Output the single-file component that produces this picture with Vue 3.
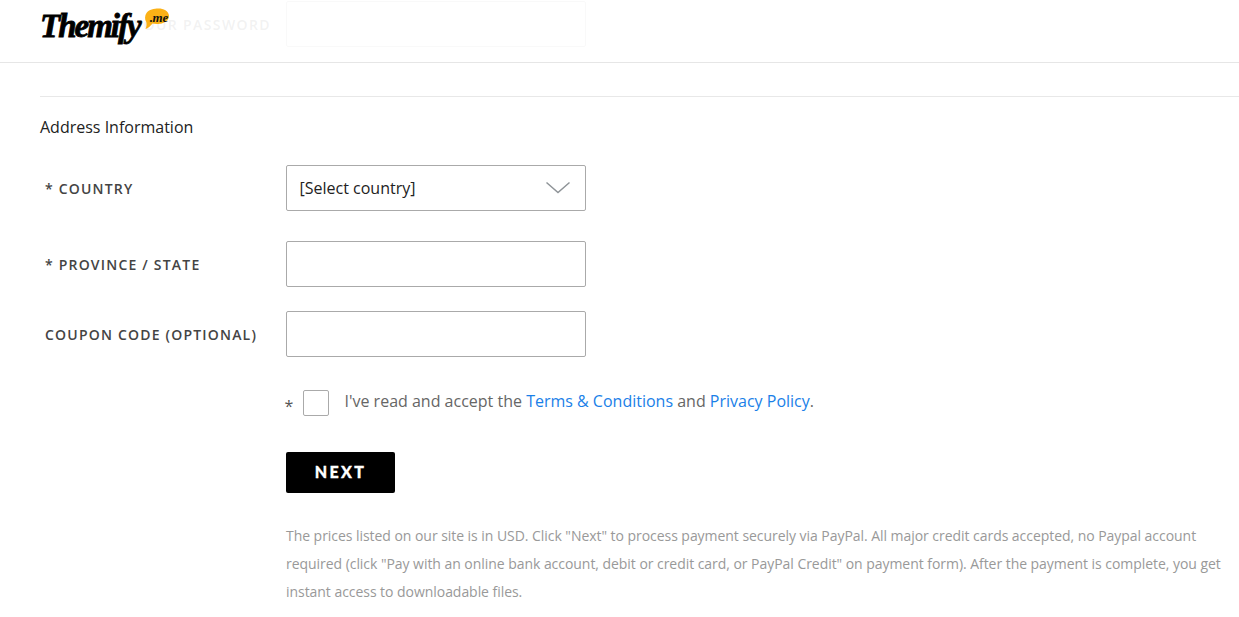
<template>
  <div class="page">
    <header class="site-header">
      <div class="logo">
        <span class="logo-word">Themify</span>
        <span class="logo-badge">
          <svg width="26" height="22" viewBox="0 0 26 22">
            <path d="M2.500 5C5 1.500 10 .5 14.500.5c5 0 10 2.500 10.500 7 .3 4.500-4 7.500-9 8.300-3 .4-5.500.2-7.500-.2C6.500 18 4 20.500 1.500 21c1-2 1.200-4.500.8-7C.5 11.500.8 7.500 2.500 5z" fill="#fbb116"/>
          </svg>
          <span class="logo-me">.me</span>
        </span>
      </div>
    </header>

    <form class="form" @submit.prevent>
      <div class="row password-row">
        <label>Your Password</label>
        <input class="field" type="password" />
      </div>

      <hr class="divider" />
      <h4 class="section-title">Address Information</h4>

      <div class="row country-row">
        <label>* Country</label>
        <div class="select-box">
          <span>[Select country]</span>
          <svg class="chevron" width="26" height="14" viewBox="0 0 26 14" fill="none">
            <path d="M1.500 1.500L13 11.500L24.500 1.500" stroke="#8f9498" stroke-width="1.500"/>
          </svg>
        </div>
      </div>

      <div class="row province-row">
        <label>* Province / State</label>
        <input class="field" type="text" />
      </div>

      <div class="row coupon-row">
        <label>Coupon Code (optional)</label>
        <input class="field" type="text" />
      </div>

      <div class="terms">
        <span class="star">*</span>
        <span class="checkbox"></span>
        <span class="terms-text">I've read and accept the <a href="#">Terms &amp; Conditions</a> and <a href="#">Privacy Policy</a>.</span>
      </div>

      <button class="next-btn" type="submit">Next</button>

      <p class="note">The prices listed on our site is in USD. Click "Next" to process payment securely via PayPal. All major credit cards accepted, no Paypal account required (click "Pay with an online bank account, debit or credit card, or PayPal Credit" on payment form). After the payment is complete, you get instant access to downloadable files.</p>
    </form>
  </div>
</template>

<script setup>
</script>

<style>
html, body {
  margin: 0;
  background: #fff;
  overflow: hidden;
}
</style>

<style scoped>
.page {
  position: relative;
  height: 617px;
  overflow: hidden;
  font-family: "Open Sans", "Noto Sans", sans-serif;
}

.site-header {
  position: absolute;
  top: 0;
  left: 0;
  right: 0;
  height: 62px;
  background: rgba(255, 255, 255, 0.93);
  border-bottom: 1px solid #e6e6e6;
  z-index: 5;
}

.logo {
  display: flex;
  position: absolute;
  left: 40px;
  top: 6px;
}

.logo-word {
  font-family: "Liberation Serif", serif;
  font-style: italic;
  font-weight: 700;
  font-size: 33px;
  line-height: 40px;
  letter-spacing: -2px;
  color: #000;
  -webkit-text-stroke: 0.8px #000;
}

.logo-badge {
  position: relative;
  width: 26px;
  height: 22px;
  margin: 2px 0 0 4px;
}

.logo-me {
  position: absolute;
  left: 6px;
  top: 3px;
  font-family: "Liberation Serif", serif;
  font-style: italic;
  font-weight: 700;
  font-size: 13px;
  line-height: 14px;
  letter-spacing: -0.3px;
  color: #111;
}

.form {
  padding: 1px 0 0 40px;
}

.row {
  display: flex;
  align-items: center;
}

.row label {
  width: 246px;
  padding: 1px 0 0 5px;
  box-sizing: border-box;
  font-size: 14px;
  font-weight: 600;
  letter-spacing: 1.2px;
  text-transform: uppercase;
  color: #444;
  white-space: nowrap;
}

.password-row label {
  padding-right: 15px;
  text-align: right;
  letter-spacing: 1.4px;
}

.field,
.select-box {
  width: 300px;
  height: 46px;
  box-sizing: border-box;
  border: 1px solid #aaa;
  border-radius: 2px;
  background: #fff;
  margin: 0;
  padding: 0 12.5px;
  font-family: inherit;
  font-size: 16px;
  color: #222;
  outline: none;
}

.select-box {
  display: flex;
  align-items: center;
  justify-content: space-between;
}

.chevron {
  margin-right: 1.5px;
}

.divider {
  border: 0;
  border-top: 1px solid #e8e8e8;
  margin: 49px 0 0;
}

.section-title {
  margin: 19px 0 0;
  font-size: 16px;
  font-weight: 400;
  line-height: 22px;
  color: #222;
}

.country-row {
  margin-top: 27px;
}

.province-row {
  margin-top: 30px;
}

.coupon-row {
  margin-top: 24px;
}

.terms {
  display: flex;
  align-items: center;
  margin: 33px 0 0 244.5px;
  height: 26px;
}

.star {
  font-size: 16px;
  color: #555;
  width: 18.5px;
  position: relative;
  top: 3px;
}

.checkbox {
  width: 26px;
  height: 26px;
  box-sizing: border-box;
  border: 1px solid #aaa;
  border-radius: 2px;
}

.terms-text {
  margin-left: 15.5px;
  font-size: 16px;
  line-height: 22px;
  position: relative;
  top: -2px;
  color: #666;
}

.terms-text a {
  color: #1a7fe8;
  text-decoration: none;
}

.next-btn {
  display: block;
  width: 109px;
  height: 41px;
  margin: 36px 0 0 246px;
  padding: 0 0 2px;
  border: 0;
  border-radius: 2px;
  background: #000;
  color: #fff;
  font-family: Lato, "Open Sans", sans-serif;
  font-size: 16px;
  font-weight: 900;
  letter-spacing: 2.400px;
  text-transform: uppercase;
  -webkit-text-stroke: 0.3px #fff;
  cursor: pointer;
}

.note {
  margin: 29px 0 0 246px;
  font-size: 14px;
  line-height: 28px;
  letter-spacing: -0.046px;
  color: #999;
}
</style>
